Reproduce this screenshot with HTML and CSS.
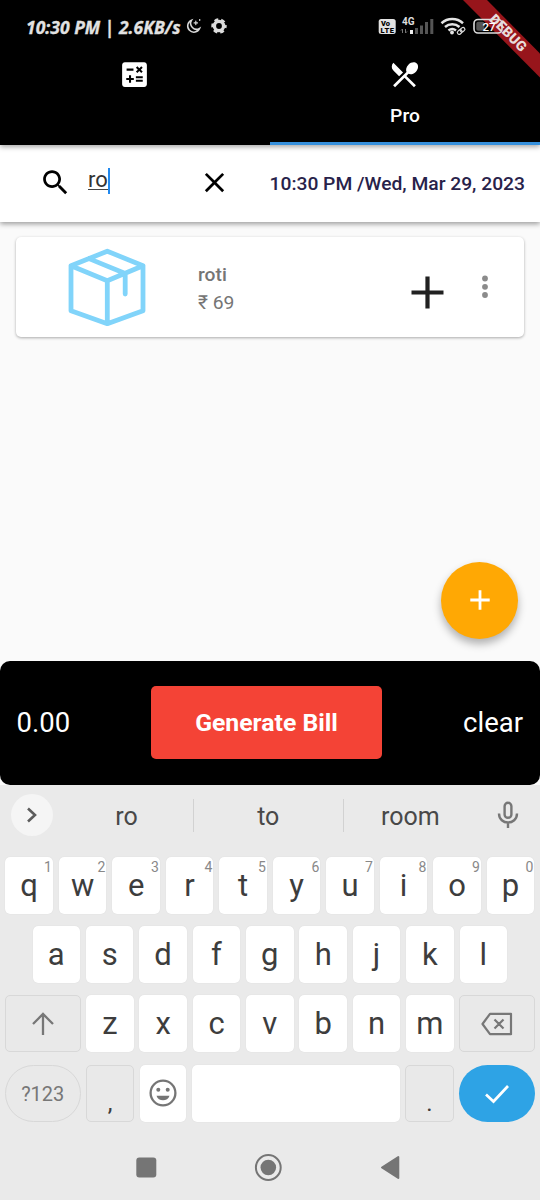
FILE: index.html
```html
<!DOCTYPE html>
<html lang="en">
<head>
<meta charset="utf-8">
<title>Billing</title>
<link rel="stylesheet" href="styles.css">
</head>
<body>
<header class="header">
  <div class="status">
    <span class="status-text">10:30 PM | 2.6KB/s</span>
    <svg class="moon" width="16" height="16" viewBox="0 0 16 16" fill="none" stroke="#d8d8d8" stroke-width="1.5" stroke-linecap="round"><path d="M5.6 2.2A6.2 6.2 0 1 0 13.6 10.4A5.9 5.9 0 0 1 5.6 2.2Z"/><path d="M9.8 3.2v3.4M8.1 4.9h3.4" stroke-width="1.2"/><path d="M13.7 1.6v.6" stroke-width="1.4"/></svg>
    <svg class="gear" width="16" height="16" viewBox="0 0 16 16"><circle cx="8" cy="8" r="4.6" fill="none" stroke="#dcdcdc" stroke-width="3.4"/><circle cx="8" cy="8" r="6.5" fill="none" stroke="#dcdcdc" stroke-width="2.4" stroke-dasharray="3.8 3" stroke-dashoffset="1.9"/></svg>
    <svg class="signals" width="132" height="24" viewBox="378 14 132 24" font-family="Roboto, sans-serif">
      <rect x="378.700" y="19" width="17" height="15" rx="2.500" fill="#e2e2e2"/>
      <text x="381" y="26" font-size="7.500" font-weight="900" fill="#000">Vo</text>
      <text x="380.500" y="32.600" font-size="7.500" font-weight="900" fill="#000" textLength="13.500">LTE</text>
      <text x="402" y="25.300" font-size="10" font-weight="700" fill="#dedede">4G</text>
      <path d="M402.500 33v-4l-1.500 1.500M405.500 29v4l1.500-1.500" stroke="#777" fill="none"/>
      <path d="M410 34v-4h3v4z" fill="#eee"/>
      <path d="M415 34v-6h3v6zM420 34V25.500h3V34zM425 34V22h3v12zM430.300 34V19h3v15z" fill="#555"/>
      <g fill="none" stroke="#e4e4e4" stroke-width="2.500"><path d="M441.500 23.200a16 16 0 0 1 21.500 0M445 27a11 11 0 0 1 14.500 0M448.500 30.500a6 6 0 0 1 7.500 0"/></g>
      <circle cx="452" cy="32.500" r="1.900" fill="#e4e4e4"/>
      <g transform="rotate(-40 461 31)" fill="none" stroke="#ddd" stroke-width="1.200"><rect x="456.800" y="29.200" width="5" height="3.600" rx="1.800"/><rect x="460.500" y="29.200" width="5" height="3.600" rx="1.800"/></g>
      <rect x="474" y="19.500" width="28" height="13.500" rx="4" fill="none" stroke="#ddd" stroke-width="1.600"/>
      <rect x="476.300" y="21.700" width="8" height="9" rx="2" fill="#555"/>
      <text x="482.500" y="30.600" font-size="11.500" font-weight="500" fill="#fff">27</text>
    </svg>
  </div>
  <nav class="tabs">
    <div class="tab">
      <svg width="33" height="33" viewBox="0 0 24 24" fill="#fff"><path fill-rule="evenodd" d="M19 3H5c-1.100 0-2 .9-2 2v14c0 1.100.9 2 2 2h14c1.100 0 2-.9 2-2V5c0-1.100-.9-2-2-2zM13.030 7.060L14.090 6l1.410 1.410L16.910 6l1.060 1.060-1.410 1.410 1.410 1.410-1.060 1.060-1.410-1.400-1.410 1.410-1.060-1.060 1.410-1.410-1.410-1.420zM6.250 7.720h5v1.500h-5v-1.500zM11.500 16h-2v2H8v-2H6v-1.500h2v-2h1.500v2h2V16zm6.500 1.250h-5v-1.500h5v1.500zm0-2.500h-5v-1.500h5v1.500z"/></svg>
    </div>
    <div class="tab active">
      <svg width="33" height="33" viewBox="0 0 24 24" fill="#fff"><path d="M8.100 13.340l2.830-2.830L3.910 3.500c-1.560 1.560-1.560 4.090 0 5.660l4.190 4.180zm6.780-1.810c1.530.71 3.680.21 5.270-1.380 1.910-1.910 2.280-4.650.81-6.120-1.460-1.460-4.200-1.100-6.120.81-1.590 1.590-2.090 3.740-1.380 5.270L3.700 19.870l1.410 1.410L12 14.410l6.880 6.880 1.410-1.410L13.410 13l1.470-1.470z"/></svg>
      <span>Pro</span>
    </div>
  </nav>
  <svg class="banner" width="90" height="90" viewBox="0 0 90 90"><path d="M13 0H37L90 53.500V77.500Z" fill="#a3171d" fill-opacity=".93"/><text transform="translate(58 33) rotate(45)" text-anchor="middle" y="4.500" textLength="46" font-size="14" font-weight="900" font-family="Roboto, sans-serif" fill="#e9dcdc">DEBUG</text></svg>
</header>

<section class="search">
  <svg class="lens" width="33" height="33" viewBox="0 0 24 24" fill="#000"><path d="M15.500 14h-.79l-.28-.27C15.410 12.590 16 11.110 16 9.500 16 5.910 13.090 3 9.500 3S3 5.910 3 9.500 5.910 16 9.500 16c1.610 0 3.090-.59 4.230-1.570l.27.28v.79l5 4.990L20.490 19l-4.990-5zm-6 0C7.010 14 5 11.990 5 9.500S7.010 5 9.500 5 14 7.010 14 9.500 11.990 14 9.500 14z"/></svg>
  <div class="query"><span>ro</span><i class="caret"></i></div>
  <svg class="clear-x" width="33" height="33" viewBox="0 0 24 24" fill="#000"><path d="M19 6.410L17.590 5 12 10.590 6.410 5 5 6.410 10.590 12 5 17.590 6.410 19 12 13.410 17.590 19 19 17.590 13.410 12z"/></svg>
  <div class="date">10:30 PM /Wed, Mar 29, 2023</div>
</section>

<main class="content">
  <article class="card">
    <svg class="box" width="80" height="80" viewBox="67 247 80 80" fill="none" stroke="#81d4fa" stroke-width="4.800" stroke-linejoin="round" stroke-linecap="round"><path d="M107.300 251.200L143 265.800V310.800L107.300 323.700L71 310.800V265.800ZM71 265.800L107.300 280.800L143 265.800M107.300 280.800V323.700M89 258.600L125.200 273.500V294"/></svg>
    <div class="item"><b>roti</b><span>₹ 69</span></div>
    <svg class="plus" width="33" height="33" viewBox="0 0 33 33"><path d="M16.500 .5V32.500M.5 16.500H32.500" stroke="#212121" stroke-width="4.200"/></svg>
    <svg class="dots" width="8" height="24" viewBox="0 0 8 24" fill="#8b8b8b"><circle cx="4" cy="3.500" r="2.900"/><circle cx="4" cy="11.800" r="2.900"/><circle cx="4" cy="20" r="2.900"/></svg>
  </article>
  <button class="fab"><svg width="20" height="20" viewBox="0 0 20 20"><path d="M10 .3V19.700M.3 10H19.700" stroke="#fff" stroke-width="2.800"/></svg></button>
</main>

<section class="bill">
  <span class="total">0.00</span>
  <button class="generate">Generate Bill</button>
  <span class="clear">clear</span>
</section>

<section class="keyboard">
  <div class="suggest">
    <span class="more"><svg width="12" height="18" viewBox="0 0 12 18"><path d="M2 2.500L9 9L2 15.500" fill="none" stroke="#5c5c5c" stroke-width="2.600"/></svg></span>
    <span class="word">ro</span><span class="word mid">to</span><span class="word">room</span>
    <svg class="mic" width="22" height="28" viewBox="0 0 22 28" fill="none" stroke="#777" stroke-width="2.400"><rect x="7.600" y="1.800" width="6.800" height="15" rx="3.400"/><path d="M2 12.500C2 24.500 20 24.500 20 12.500M11 21.500V27"/></svg>
  </div>
  <div class="row">
    <kbd>q<sup>1</sup></kbd><kbd>w<sup>2</sup></kbd><kbd>e<sup>3</sup></kbd><kbd>r<sup>4</sup></kbd><kbd>t<sup>5</sup></kbd><kbd>y<sup>6</sup></kbd><kbd>u<sup>7</sup></kbd><kbd>i<sup>8</sup></kbd><kbd>o<sup>9</sup></kbd><kbd>p<sup>0</sup></kbd>
  </div>
  <div class="row second"><kbd>a</kbd><kbd>s</kbd><kbd>d</kbd><kbd>f</kbd><kbd>g</kbd><kbd>h</kbd><kbd>j</kbd><kbd>k</kbd><kbd>l</kbd></div>
  <div class="row third">
    <kbd class="ghost wide"><svg width="22" height="24" viewBox="0 0 22 24" fill="none" stroke="#777" stroke-width="2.300"><path d="M11 23V2M1 12L11 2L21 12"/></svg></kbd><kbd>z</kbd><kbd>x</kbd><kbd>c</kbd><kbd>v</kbd><kbd>b</kbd><kbd>n</kbd><kbd>m</kbd><kbd class="ghost wide"><svg width="32" height="24" viewBox="0 0 32 24" fill="none" stroke="#777" stroke-width="2.200" stroke-linejoin="round"><path d="M9 1.800H30V22.200H9L1.500 12ZM13.500 7.500L22.500 16.500M22.500 7.500L13.500 16.500"/></svg></kbd>
  </div>
  <div class="row third">
    <kbd class="ghost wide pill">?123</kbd><kbd class="ghost punct">,</kbd><kbd><svg width="28" height="28" viewBox="0 0 28 28"><circle cx="14" cy="14" r="12.400" fill="none" stroke="#757575" stroke-width="2.300"/><circle cx="9.300" cy="10.800" r="2" fill="#757575"/><circle cx="18.700" cy="10.800" r="2" fill="#757575"/><path d="M7.500 16.700H20.500C19 22.800 9 22.800 7.500 16.700Z" fill="#757575"/></svg></kbd><kbd class="space"></kbd><kbd class="ghost punct">.</kbd><kbd class="wide pill enter"><svg width="26" height="20" viewBox="0 0 26 20"><path d="M2 10.500L9.500 17.500L24 2" fill="none" stroke="#fff" stroke-width="2.700"/></svg></kbd>
  </div>
  <div class="nav">
    <svg width="264" height="28" viewBox="136 1154 264 28" fill="#757575"><rect x="136.300" y="1157.500" width="20" height="20" rx="3"/><circle cx="268.300" cy="1167.500" r="12.400" fill="none" stroke="#757575" stroke-width="2"/><circle cx="268.300" cy="1167.500" r="7.800"/><path d="M382 1167.500L398.300 1157V1178Z" stroke="#757575" stroke-width="2" stroke-linejoin="round"/></svg>
  </div>
</section>
</body>
</html>
```
FILE: styles.css
```css
* { box-sizing: border-box; }
body { margin: 0; width: 540px; height: 1200px; overflow: hidden; display: flex; flex-direction: column; background: #fafafa; font-family: Roboto, sans-serif; }
svg { display: block; flex: none; }
button { border: 0; padding: 0; font-family: inherit; }

.header { position: relative; z-index: 3; height: 144.500px; flex: none; background: #000; box-shadow: 0 2px 5px rgba(0,0,0,.35); display: flex; flex-direction: column; }
.status { position: relative; z-index: 1; height: 55px; display: flex; align-items: flex-start; padding-left: 26px; }
.status-text { width: 160px; white-space: nowrap; color: #e2e2e2; font: italic 700 17.500px/24px "Noto Sans", sans-serif; -webkit-text-stroke: .3px #e2e2e2; margin-top: 15px; }
.moon { margin-top: 18px; }
.gear { margin: 18px 0 0 9px; }
.signals { margin: 14px 0 0 151px; }
.tabs { flex: 1; display: flex; }
.tab { flex: 1; display: flex; flex-direction: column; align-items: center; padding-top: 3px; color: #fff; font-size: 19.250px; font-weight: 500; line-height: 23px; border-bottom: 3px solid transparent; }
.tab svg { margin-left: -1px; }
.tab span { margin-top: 13px; }
.active { border-color: #3690dc; }
.banner { position: absolute; top: 0; right: 0; }

.search { position: relative; z-index: 2; height: 77px; flex: none; display: flex; align-items: flex-start; padding: 21.500px 0 0 38.500px; background: #fff; box-shadow: 0 2px 5px rgba(0,0,0,.38); }
.query { display: flex; width: 109px; margin: 2px 0 0 16.500px; font-size: 22px; line-height: 24px; color: #333; }
.query span { height: 22px; border-bottom: 1px solid #444; }
.caret { width: 2.500px; height: 26px; background: #2189ef; }
.clear-x { margin-left: .5px; }
.date { margin: 5.500px 0 0 39px; white-space: nowrap; font-size: 19.250px; line-height: 23px; font-weight: 500; color: #28224a; }

.content { position: relative; height: 439px; flex: none; padding: 15.500px 16px; }
.card { height: 100px; background: #fff; border-radius: 5px; box-shadow: 0 1px 3px rgba(0,0,0,.32); display: flex; align-items: flex-start; padding: 9.500px 0 0 51px; }
.item { display: flex; flex-direction: column; width: 213px; margin: 14.500px 0 0 51px; font-size: 19.250px; line-height: 27.500px; color: #757575; }
.item b { font-weight: 500; }
.plus { margin-top: 29px; }
.dots { margin: 28.500px 0 0 37px; }
.fab { position: absolute; right: 22px; bottom: 22px; width: 77px; height: 77px; border-radius: 50%; background: #ffa804; display: flex; align-items: center; justify-content: center; box-shadow: 0 5px 9px rgba(0,0,0,.3); }

.bill { height: 124px; flex: none; background: #000; border-radius: 10px; display: flex; align-items: center; color: #fff; font-size: 27.500px; padding: 0 17px 0 16.500px; }
.total { width: 134.500px; }
.generate { width: 231px; height: 73px; background: #f44336; border-radius: 5px; color: #fff; font-size: 24.750px; font-weight: 700; }
.clear { flex: 1; text-align: right; }

.keyboard { flex: 1; background: #eaeaea; position: relative; }
.suggest { height: 72.300px; display: flex; align-items: flex-start; padding: 9px 0 0 11px; font-size: 25px; color: #484848; }
.more { width: 42px; height: 42px; border-radius: 50%; background: #f5f5f5; display: flex; align-items: center; justify-content: center; margin-right: 7px; }
.word { width: 133.500px; height: 33px; margin-top: 5px; line-height: 36px; text-align: center; }
.word:nth-child(2) { width: 133px; }
.word.mid { width: 150.500px; border: 1px solid #d2d2d2; border-width: 0 1px; }
.mic { margin: 7.500px 0 0 20px; }
.row { height: 57px; margin-bottom: 12.300px; padding: 0 5.700px 0 5.300px; display: flex; gap: 5.800px; }
.second { padding: 0 32.900px 0 32.500px; }
.third { gap: 5.500px; padding: 0 5.300px 0 5px; }
kbd { flex: 1; position: relative; display: flex; align-items: center; justify-content: center; background: #fff; border-radius: 5px; box-shadow: 0 0 1px rgba(0,0,0,.12); color: #3d3d3d; font: 400 31px Roboto, sans-serif; }
sup { position: absolute; top: 3px; right: 1px; font-size: 14px; line-height: 15px; color: #888; }
.ghost { background: #e9e9e9; border: 1px solid #d8d8d8; box-shadow: none; }
.wide { flex: 0 0 75.500px; }
.pill { border-radius: 29px; font-size: 20px; color: #777; padding-top: 2px; }
.punct { padding-top: 20px; font-size: 24px; }
.space { flex: 0 0 208px; }
.enter { background: #2ea3e5; box-shadow: none; }
.nav { display: flex; padding: 19.800px 0 0 136px; }
```
